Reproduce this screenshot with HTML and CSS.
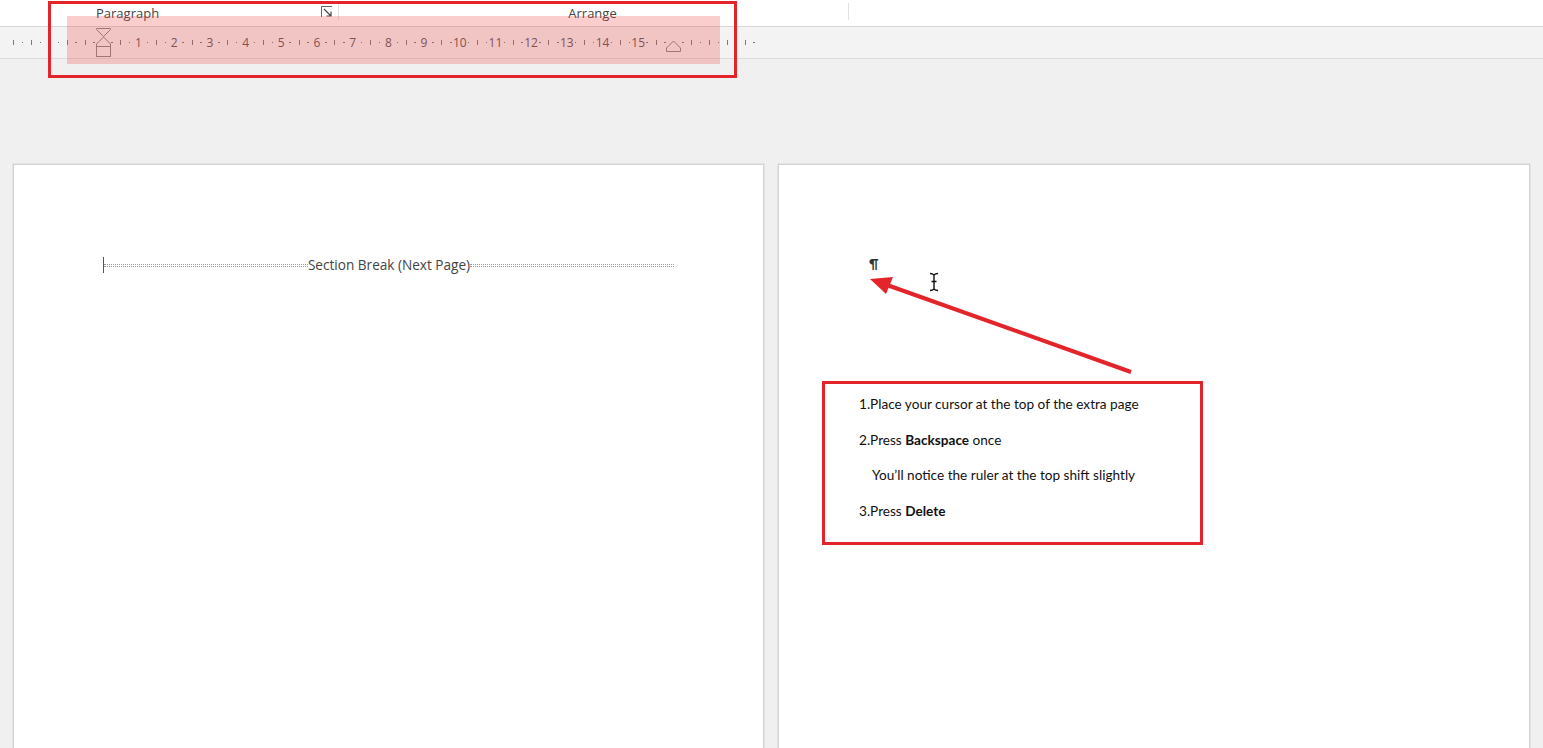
FILE: index.html
```html
<!DOCTYPE html>
<html>
<head>
<meta charset="utf-8">
<link rel="stylesheet" href="styles.css">
</head>
<body>
<header class="topbar">
  <div class="group group-para">
    <span class="group-label">Paragraph</span>
    <svg class="launcher" width="12" height="12" viewBox="0 0 12 12">
      <path d="M0.5 11 V0.5 H11" fill="none" stroke="#666" stroke-width="1"/>
      <path d="M3 3 L10 10 M10 5.5 V10 H5.5" fill="none" stroke="#444" stroke-width="1.2"/>
    </svg>
  </div>
  <div class="sep"></div>
  <div class="group group-arrange">
    <span class="group-label">Arrange</span>
  </div>
  <div class="sep"></div>
</header>

<div class="ruler">
  <div class="ruler-track">
    <span class="c t"></span><span class="c d"></span><span class="c t"></span><span class="c d"></span><span class="c t"></span><span class="c d"></span><span class="c t"></span><span class="c d"></span><span class="c t"></span><span class="c d"></span>
    <span class="c"></span>
    <span class="c d"></span><span class="c t"></span><span class="c d"></span><span class="c n">1</span>
    <span class="c d"></span><span class="c t"></span><span class="c d"></span><span class="c n">2</span>
    <span class="c d"></span><span class="c t"></span><span class="c d"></span><span class="c n">3</span>
    <span class="c d"></span><span class="c t"></span><span class="c d"></span><span class="c n">4</span>
    <span class="c d"></span><span class="c t"></span><span class="c d"></span><span class="c n">5</span>
    <span class="c d"></span><span class="c t"></span><span class="c d"></span><span class="c n">6</span>
    <span class="c d"></span><span class="c t"></span><span class="c d"></span><span class="c n">7</span>
    <span class="c d"></span><span class="c t"></span><span class="c d"></span><span class="c n">8</span>
    <span class="c d"></span><span class="c t"></span><span class="c d"></span><span class="c n">9</span>
    <span class="c d"></span><span class="c t"></span><span class="c d"></span><span class="c n">10</span>
    <span class="c d"></span><span class="c t"></span><span class="c d"></span><span class="c n">11</span>
    <span class="c d"></span><span class="c t"></span><span class="c d"></span><span class="c n">12</span>
    <span class="c d"></span><span class="c t"></span><span class="c d"></span><span class="c n">13</span>
    <span class="c d"></span><span class="c t"></span><span class="c d"></span><span class="c n">14</span>
    <span class="c d"></span><span class="c t"></span><span class="c d"></span><span class="c n">15</span>
    <span class="c d"></span><span class="c t"></span><span class="c d"></span>
    <span class="c"></span>
    <span class="c d"></span><span class="c t"></span><span class="c d"></span><span class="c t"></span><span class="c d"></span><span class="c t"></span><span class="c d"></span><span class="c t"></span><span class="c d"></span>
  </div>
  <svg class="indent-left" width="17" height="31" viewBox="0 0 17 31">
    <path d="M1.5 1.5 H15.5 V2.5 L8.5 9.5 L1.5 2.5 Z" fill="#f3f3f3" stroke="#888" stroke-width="1"/>
    <path d="M8.5 10 L15.5 17 V19.5 H1.5 V17 Z" fill="#f3f3f3" stroke="#888" stroke-width="1"/>
    <rect x="1.5" y="19.5" width="14" height="10" fill="#f3f3f3" stroke="#888" stroke-width="1"/>
  </svg>
  <svg class="indent-right" width="17" height="13" viewBox="0 0 17 13">
    <path d="M8.5 1 L15.5 8 V11.5 H1.5 V8 Z" fill="#f3f3f3" stroke="#888" stroke-width="1"/>
  </svg>
</div>

<main class="canvas">
  <section class="page page-left">
    <div class="section-break">
      <span class="caret"></span>
      <span class="dots"></span>
      <span class="sb-label">Section Break (Next Page)</span>
      <span class="dots"></span>
    </div>
  </section>
  <section class="page page-right">
    <div class="pilcrow">¶</div>
    <svg class="ibeam" width="12" height="20" viewBox="0 0 12 20">
      <path d="M2 1.5 C4 1.5 5 2 6 3 C7 2 8 1.5 10 1.5 M6 3 V17 M2 18.5 C4 18.5 5 18 6 17 C7 18 8 18.5 10 18.5 M3.5 9.5 H8.5" fill="none" stroke="#111" stroke-width="1.4"/>
    </svg>
  </section>
</main>

<div class="hl-fill"></div>
<div class="hl-frame"></div>

<svg class="arrow" width="1543" height="748" viewBox="0 0 1543 748">
  <line x1="1131" y1="372" x2="887" y2="285" stroke="#e3242b" stroke-width="4"/>
  <path d="M870 279 L893 277 L886 294 Z" fill="#e3242b"/>
</svg>

<div class="steps">
  <p class="step">1.Place your cursor at the top of the extra page</p>
  <p class="step">2.Press <b>Backspace</b> once</p>
  <p class="step note">You’ll notice the ruler at the top shift slightly</p>
  <p class="step">3.Press <b>Delete</b></p>
</div>
</body>
</html>
```

FILE: styles.css
```css
html, body {
  margin: 0;
  padding: 0;
  height: 100%;
  overflow: hidden;
}
body {
  background: #f0f0f0;
  font-family: "Open Sans", "Noto Sans", sans-serif;
  position: relative;
}

/* ribbon group labels */
.topbar {
  height: 26px;
  background: #ffffff;
  border-bottom: 1px solid #d6d6d6;
  display: flex;
  align-items: stretch;
}
.group {
  display: flex;
  align-items: center;
  box-sizing: border-box;
}
.group-para {
  width: 338px;
  padding-left: 96px;
  padding-right: 5px;
  justify-content: space-between;
}
.group-arrange {
  width: 509px;
  justify-content: center;
  padding-right: 2px;
}
.group-label {
  font-size: 13px;
  color: #444;
  line-height: 26px;
  margin-top: -1px;
}
.launcher {
  margin-top: -2px;
}
.sep {
  width: 1px;
  background: #e2e2e2;
  margin: 3px 0 6px;
}

/* ruler */
.ruler {
  height: 31px;
  background: #f3f3f3;
  border-bottom: 1px solid #dcdcdc;
  position: relative;
}
.ruler-track {
  display: flex;
  align-items: center;
  height: 100%;
  padding-left: 9.2px;
}
.c {
  flex: 0 0 8.93px;
  width: 8.93px;
  display: flex;
  justify-content: center;
  align-items: center;
  overflow: visible;
}
.t::before {
  content: "";
  width: 1px;
  height: 5px;
  background: #7a7a7a;
}
.d::before {
  content: "";
  width: 1.5px;
  height: 1.5px;
  background: #777;
}
.n {
  font-size: 12px;
  color: #5a5a5a;
  white-space: nowrap;
  line-height: 1;
}
.indent-left {
  position: absolute;
  left: 95px;
  top: 0;
}
.indent-right {
  position: absolute;
  left: 665px;
  top: 13px;
}

/* document canvas */
.canvas {
  display: flex;
  gap: 14px;
  padding: 105px 0 0 13px;
}
.page {
  height: 640px;
  background: #ffffff;
  border: 1px solid #d2d2d2;
  box-shadow: 0 0 0 1px #e4e4e4;
  box-sizing: border-box;
  position: relative;
  flex: 0 0 auto;
}
.page-left {
  width: 751px;
}
.page-right {
  width: 752px;
}

.section-break {
  display: flex;
  align-items: center;
  margin: 91px 0 0 89px;
  width: 571px;
  height: 17px;
}
.caret {
  width: 1px;
  height: 16px;
  background: #555;
  flex: 0 0 1px;
}
.dots {
  flex: 1;
  height: 1px;
  border-top: 1px dotted #9a9a9a;
  border-bottom: 1px dotted #9a9a9a;
  margin-top: 1px;
}
.sb-label {
  font-size: 13.6px;
  color: #444;
  line-height: 17px;
  white-space: nowrap;
}

.pilcrow {
  font-family: "Lato", "Liberation Sans", sans-serif;
  font-weight: 700;
  font-size: 13px;
  color: #333;
  line-height: 14px;
  margin: 92px 0 0 90px;
  width: 10px;
}
.ibeam {
  position: absolute;
  left: 149px;
  top: 107px;
}

/* annotations */
.hl-fill {
  position: absolute;
  left: 67px;
  top: 16px;
  width: 653px;
  height: 48px;
  background: rgba(240, 60, 60, 0.25);
}
.hl-frame {
  position: absolute;
  left: 48px;
  top: 1px;
  width: 689px;
  height: 77px;
  border: 3px solid #e3242b;
  box-sizing: border-box;
}
.arrow {
  position: absolute;
  left: 0;
  top: 0;
  pointer-events: none;
}
.steps {
  position: absolute;
  left: 822px;
  top: 381px;
  width: 381px;
  height: 164px;
  box-sizing: border-box;
  border: 3px solid #e3242b;
  background: #ffffff;
  padding: 3px 0 0 34px;
  font-family: "Lato", "Liberation Sans", sans-serif;
  font-size: 13.6px;
  color: #111;
}
.step {
  margin: 0;
  line-height: 35.7px;
  white-space: nowrap;
}
.step b {
  font-weight: 700;
}
.note {
  padding-left: 13px;
}
```
